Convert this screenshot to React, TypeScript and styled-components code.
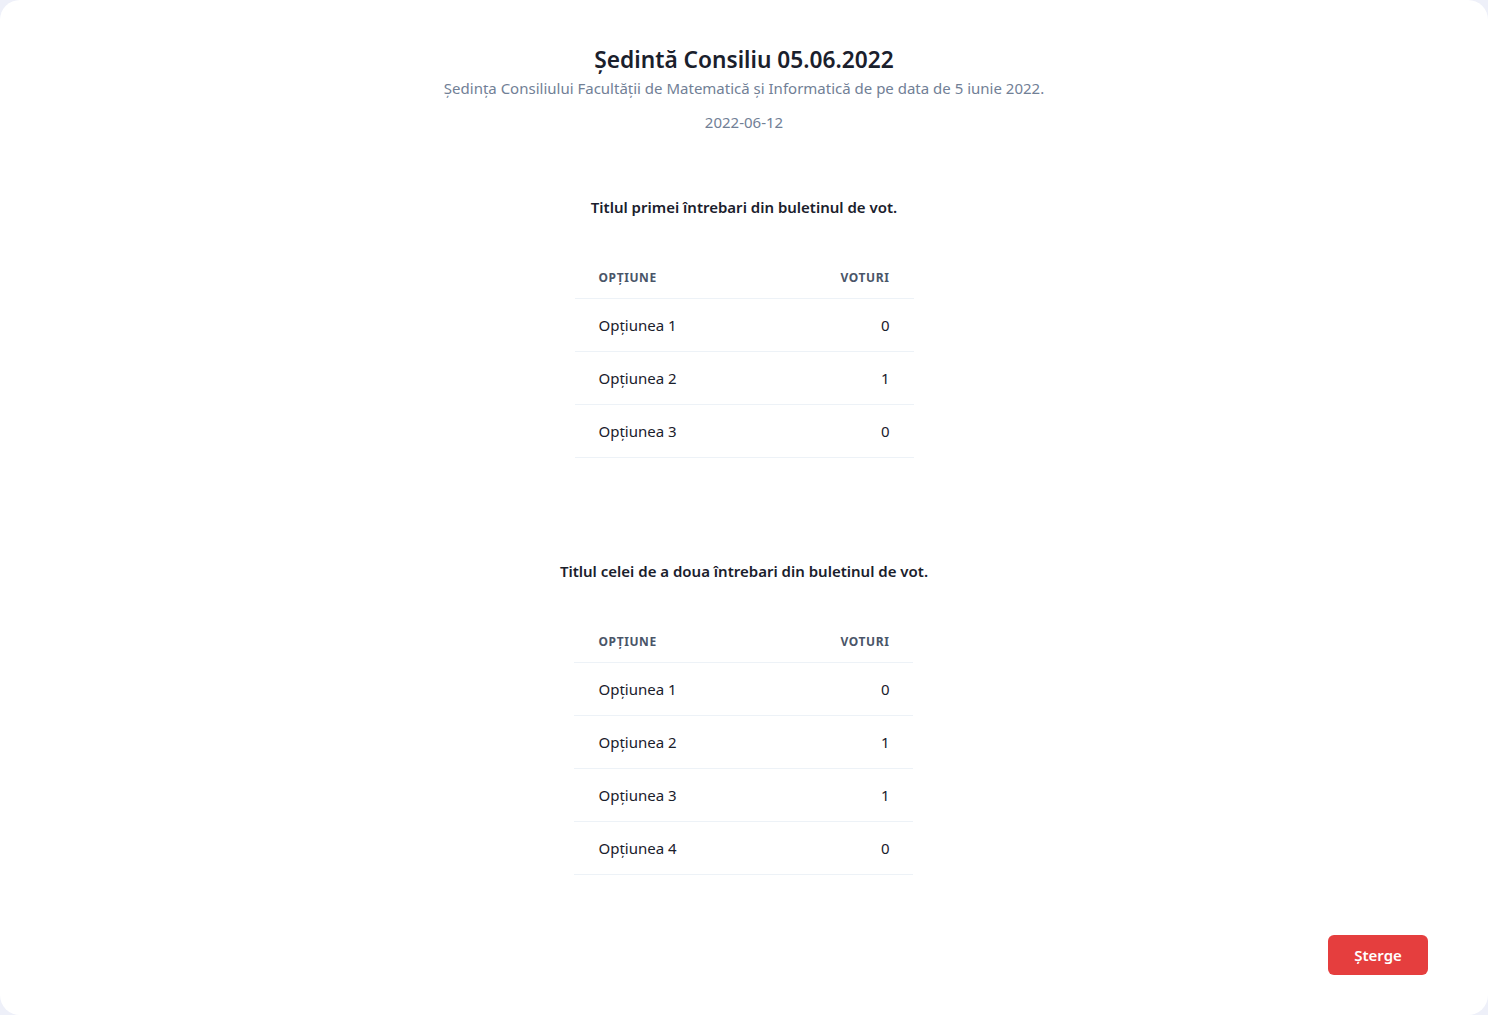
import React from "react";
import styled, { createGlobalStyle } from "styled-components";

const Global = createGlobalStyle`
  html, body { margin: 0; padding: 0; }
  body {
    background: #eef0f9;
    font-family: "Noto Sans", "Open Sans", sans-serif;
    -webkit-font-smoothing: antialiased;
  }
`;

const Card = styled.main`
  box-sizing: border-box;
  min-height: 100vh;
  background: #ffffff;
  border-radius: 20px;
  padding: 44px 60px 40px;
  display: flex;
  flex-direction: column;
`;

const Header = styled.header`
  display: flex;
  flex-direction: column;
  align-items: center;
`;

const Title = styled.h1`
  margin: 0;
  font-size: 22.7px;
  line-height: 32px;
  font-weight: 600;
  color: #1a202c;
`;

const Subtitle = styled.p<{ $gap?: number }>`
  margin: ${(p) => p.$gap ?? 0}px 0 0;
  font-size: 15px;
  line-height: 24px;
  color: #718096;
`;

const Sections = styled.div`
  display: flex;
  flex-direction: column;
  align-items: center;
  gap: 101px;
  margin-top: 61px;
`;

const Section = styled.section`
  display: flex;
  flex-direction: column;
  align-items: center;
  gap: 39px;
`;

const Question = styled.h2`
  margin: 0;
  font-size: 15px;
  line-height: 24px;
  font-weight: 600;
  color: #1a202c;
`;

const Table = styled.table`
  width: 339px;
  border-collapse: collapse;
`;

const Th = styled.th<{ $right?: boolean }>`
  padding: 12px 24px;
  font-size: 12px;
  line-height: 16px;
  font-weight: 700;
  letter-spacing: 0.05em;
  text-transform: uppercase;
  color: #4a5568;
  text-align: ${(p) => (p.$right ? "right" : "left")};
  border-bottom: 1px solid #edf2f7;
`;

const Td = styled.td<{ $right?: boolean }>`
  padding: 16px 24px;
  font-size: 15px;
  line-height: 20px;
  color: #1a202c;
  text-align: ${(p) => (p.$right ? "right" : "left")};
  border-bottom: 1px solid #edf2f7;
`;

const Footer = styled.footer`
  margin-top: auto;
  display: flex;
  justify-content: flex-end;
`;

const DeleteButton = styled.button`
  height: 40px;
  width: 100px;
  border: none;
  border-radius: 6px;
  background: #e53e3e;
  color: #ffffff;
  font-family: inherit;
  font-size: 15px;
  font-weight: 600;
  cursor: pointer;
`;

const questions = [
  {
    title: "Titlul primei întrebari din buletinul de vot.",
    options: [
      ["Opțiunea 1", 0],
      ["Opțiunea 2", 1],
      ["Opțiunea 3", 0],
    ],
  },
  {
    title: "Titlul celei de a doua întrebari din buletinul de vot.",
    options: [
      ["Opțiunea 1", 0],
      ["Opțiunea 2", 1],
      ["Opțiunea 3", 1],
      ["Opțiunea 4", 0],
    ],
  },
];

export default function App() {
  return (
    <>
      <Global />
      <Card>
        <Header>
          <Title>Ședintă Consiliu 05.06.2022</Title>
          <Subtitle>
            Ședința Consiliului Facultății de Matematică și Informatică de pe data de 5 iunie 2022.
          </Subtitle>
          <Subtitle $gap={10}>2022-06-12</Subtitle>
        </Header>
        <Sections>
          {questions.map((q) => (
            <Section key={q.title}>
              <Question>{q.title}</Question>
              <Table>
                <thead>
                  <tr>
                    <Th>Opțiune</Th>
                    <Th $right>Voturi</Th>
                  </tr>
                </thead>
                <tbody>
                  {q.options.map(([name, votes]) => (
                    <tr key={name as string}>
                      <Td>{name}</Td>
                      <Td $right>{votes}</Td>
                    </tr>
                  ))}
                </tbody>
              </Table>
            </Section>
          ))}
        </Sections>
        <Footer>
          <DeleteButton>Șterge</DeleteButton>
        </Footer>
      </Card>
    </>
  );
}
